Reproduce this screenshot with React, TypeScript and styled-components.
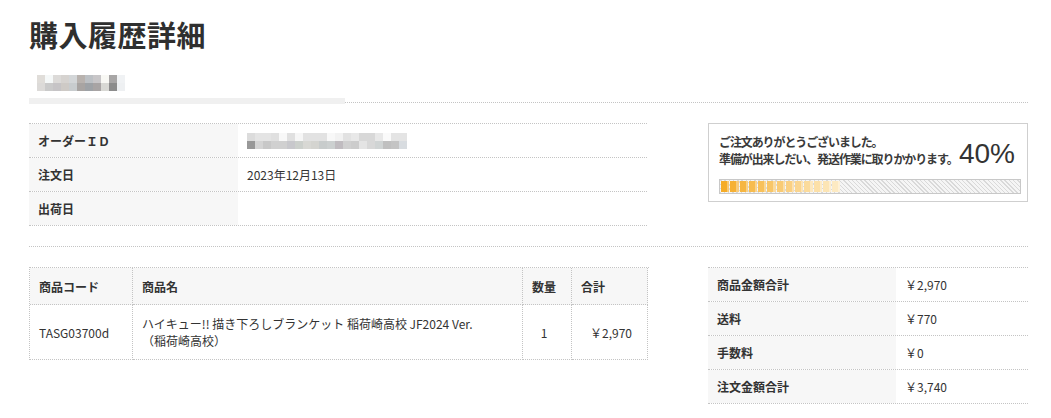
import React from 'react';
import styled, { createGlobalStyle } from 'styled-components';

const GlobalStyle = createGlobalStyle`
  body {
    margin: 0;
    background: #fff;
    color: #333;
    font-family: "Noto Sans CJK JP", "Noto Sans", sans-serif;
    font-size: 12px;
  }
`;

const DOT = '1px dotted #c4c4c4';

const Page = styled.div`
  width: 999px;
  padding: 14px 23px 0 29px;
`;

const Title = styled.h1`
  margin: 0;
  font-size: 29px;
  line-height: 40px;
  font-weight: 700;
  color: #2f2f2f;
  letter-spacing: 0.5px;
`;

const NameBlock = styled.div`
  position: relative;
  height: 49px;
  box-sizing: border-box;
  padding: 21px 0 0 8px;
  border-bottom: ${DOT};
`;

// redaction bar laid over the dotted rule
const RedactBar = styled.div`
  position: absolute;
  left: 0;
  bottom: -2px;
  width: 316px;
  height: 6px;
  background: #f0f0f0;
`;

const Mosaic = styled.div<{ $cols: number }>`
  display: grid;
  grid-template-columns: repeat(${p => p.$cols}, 8px);
  grid-auto-rows: 8px;
`;

const Pixel = styled.span<{ $c: string }>`
  background: ${p => p.$c};
`;

const Section = styled.div<{ $divider?: boolean }>`
  display: flex;
  justify-content: space-between;
  align-items: flex-start;
  padding: 20px 0;
  border-bottom: ${p => (p.$divider ? DOT : 'none')};
`;

const InfoList = styled.div<{ $width: number }>`
  width: ${p => p.$width}px;
  border-top: ${DOT};
`;

const InfoRow = styled.div`
  display: flex;
  height: 34px;
  box-sizing: border-box;
  border-bottom: ${DOT};
`;

const InfoLabel = styled.div<{ $width: number }>`
  width: ${p => p.$width}px;
  flex-shrink: 0;
  background: #f7f7f7;
  font-weight: 700;
  padding-left: 9px;
  box-sizing: border-box;
  display: flex;
  align-items: center;
`;

const InfoValue = styled.div`
  flex: 1;
  padding-left: 9px;
  display: flex;
  align-items: center;
`;

const ProgressBox = styled.div`
  width: 320px;
  height: 79px;
  box-sizing: border-box;
  border: 1px solid #cfcfcf;
  padding: 9px 6px 7px 10px;
`;

const MessageRow = styled.div`
  display: flex;
  align-items: flex-end;
  justify-content: space-between;
`;

const Message = styled.div`
  font-size: 12px;
  line-height: 17px;
  font-weight: 700;
  color: #3a3a3a;
  letter-spacing: -1.1px;
  white-space: nowrap;
`;

const Percent = styled.div`
  font-family: "Liberation Sans", Arial, sans-serif;
  font-size: 28px;
  line-height: 28px;
  color: #333;
  margin-right: 6px;
  margin-bottom: -1px;
`;

const Bar = styled.div`
  margin-top: 12px;
  height: 15px;
  box-sizing: border-box;
  border: 1px solid #c8c8c8;
  padding: 1px;
  background: repeating-linear-gradient(45deg, #d9d9d9 0 1px, #f5f5f5 1px 3px);
`;

const Fill = styled.div<{ $pct: number }>`
  width: ${p => p.$pct}%;
  height: 100%;
  display: flex;
  gap: 1px;
`;

const mix = (i: number, n: number) => {
  const a = [245, 172, 40];
  const b = [253, 234, 194];
  const t = n > 1 ? i / (n - 1) : 0;
  return a.map((v, k) => Math.round(v + (b[k] - v) * t));
};

const Segment = styled.span<{ $i: number; $n: number }>`
  flex: 1;
  background: ${p => {
    const [r, g, b] = mix(p.$i, p.$n);
    const lr = Math.round(r + (255 - r) * 0.35);
    const lg = Math.round(g + (255 - g) * 0.35);
    const lb = Math.round(b + (255 - b) * 0.35);
    return `linear-gradient(to right, rgb(${r},${g},${b}) 0 72%, rgb(${lr},${lg},${lb}) 72% 100%)`;
  }};
`;

const ProductGrid = styled.div`
  display: grid;
  grid-template-columns: 103px 390px 49px 76px;
  border-top: ${DOT};
  border-left: ${DOT};
  width: 619px;
`;

const Cell = styled.div<{ $head?: boolean; $align?: 'left' | 'center' | 'right' }>`
  box-sizing: border-box;
  height: ${p => (p.$head ? 37 : 55)}px;
  border-right: ${DOT};
  border-bottom: ${DOT};
  background: ${p => (p.$head ? '#f7f7f7' : '#fff')};
  font-weight: ${p => (p.$head ? 700 : 400)};
  padding: 0 15px 0 9px;
  display: flex;
  align-items: center;
  line-height: 17px;
  justify-content: ${p =>
    p.$align === 'right' ? 'flex-end' : p.$align === 'center' ? 'center' : 'flex-start'};
`;

const nameColors = [
  ['#e0ddd9', '#f5f8f8', '#dcdad8', '#d6d3d0', '#d3d6d8', '#b8b2ae', '#bcc0c4', '#c8c6c8', '#f8f8f4', '#a8a6a6', '#f0f2f4'],
  ['#dcdad8', '#cacaca', '#c6c4c6', '#cecac6', '#c8ccce', '#a8a4a2', '#9ea2a6', '#a8a4a4', '#d8d8d4', '#8c8c8c', '#eef0f2'],
];

const idColors = [
  ['#dcdcdc', '#e4e4e4', '#e4e4e4', '#e0e0e0', '#f8f8f8', '#e0e0e0', '#f6f6f6', '#e2e2e2', '#e2e2e2', '#e2e2e2',
   '#f8f8f8', '#f2f2f2', '#e2e2e2', '#e8e8e8', '#d8d8d8', '#d8d8d8', '#e8e8e8', '#fafafa', '#e4e4e4', '#e4e4e4'],
  ['#989898', '#d4d4d4', '#c8c8c8', '#d0d0d0', '#d0d0d0', '#c8c8cc', '#ccd0cc', '#d8d8d4', '#d4d4d0', '#c8cccc',
   '#ccd0d0', '#c0bcc0', '#d0d0d0', '#cccccc', '#e4e4e4', '#d8d8d8', '#d0d4d4', '#c0c0c0', '#c4c4c4', '#d8dce0'],
];

const Blur: React.FC<{ rows: string[][] }> = ({ rows }) => (
  <Mosaic $cols={rows[0].length}>
    {rows.flat().map((c, i) => (
      <Pixel key={i} $c={c} />
    ))}
  </Mosaic>
);

const summary = [
  ['商品金額合計', '2,970'],
  ['送料', '770'],
  ['手数料', '0'],
  ['注文金額合計', '3,740'],
];

const SEGMENTS = 13;

const App: React.FC = () => {
  return (
    <>
      <GlobalStyle />
      <Page>
        <Title>購入履歴詳細</Title>
        <NameBlock>
          <Blur rows={nameColors} />
          <RedactBar />
        </NameBlock>

        <Section $divider>
          <InfoList $width={618}>
            <InfoRow>
              <InfoLabel $width={209}>オーダーＩＤ</InfoLabel>
              <InfoValue>
                <Blur rows={idColors} />
              </InfoValue>
            </InfoRow>
            <InfoRow>
              <InfoLabel $width={209}>注文日</InfoLabel>
              <InfoValue>2023年12月13日</InfoValue>
            </InfoRow>
            <InfoRow>
              <InfoLabel $width={209}>出荷日</InfoLabel>
              <InfoValue />
            </InfoRow>
          </InfoList>

          <ProgressBox>
            <MessageRow>
              <Message>
                ご注文ありがとうございました。
                <br />
                準備が出来しだい、発送作業に取りかかります。
              </Message>
              <Percent>40%</Percent>
            </MessageRow>
            <Bar>
              <Fill $pct={40}>
                {Array.from({ length: SEGMENTS }).map((_, i) => (
                  <Segment key={i} $i={i} $n={SEGMENTS} />
                ))}
              </Fill>
            </Bar>
          </ProgressBox>
        </Section>

        <Section>
          <ProductGrid>
            <Cell $head>商品コード</Cell>
            <Cell $head>商品名</Cell>
            <Cell $head>数量</Cell>
            <Cell $head>合計</Cell>
            <Cell>TASG03700d</Cell>
            <Cell>
              <div>
                ハイキュー!! 描き下ろしブランケット 稲荷崎高校 JF2024 Ver.
                <br />
                （稲荷崎高校）
              </div>
            </Cell>
            <Cell $align="center">1</Cell>
            <Cell $align="right">￥2,970</Cell>
          </ProductGrid>

          <InfoList $width={320}>
            {summary.map(([label, value]) => (
              <InfoRow key={label}>
                <InfoLabel $width={188}>{label}</InfoLabel>
                <InfoValue>￥{value}</InfoValue>
              </InfoRow>
            ))}
          </InfoList>
        </Section>
      </Page>
    </>
  );
};

export default App;
